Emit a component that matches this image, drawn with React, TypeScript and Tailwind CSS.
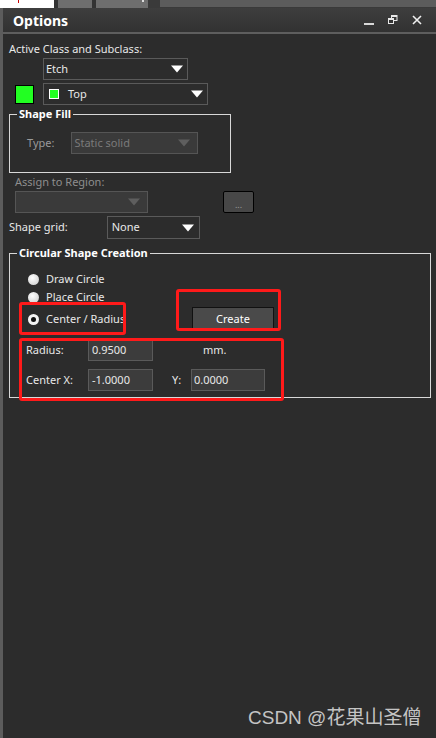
import React from "react";

function Tri({ c = "#ffffff" }: { c?: string }) {
  return (
    <svg width="12" height="8" viewBox="0 0 12 8">
      <path d="M0 0.5H12L6 7.5Z" fill={c} />
    </svg>
  );
}

function Radio({ on = false }: { on?: boolean }) {
  return (
    <span
      className={
        "flex h-[11px] w-[11px] items-center justify-center rounded-full " +
        (on ? "bg-[#f4f4f4]" : "bg-[radial-gradient(circle_at_40%_35%,#ffffff,#c8c8c8)]")
      }
    >
      {on && <span className="h-[5px] w-[5px] rounded-full bg-[#111]" />}
    </span>
  );
}

export default function App() {
  return (
    <div className="relative flex h-[738px] w-[436px] flex-col overflow-hidden bg-[#2c2c2c] font-['Noto_Sans','Open_Sans',sans-serif] text-[11px] text-[#e8e8e8]">
      {/* tab strip */}
      <div className="flex h-[8px] shrink-0 bg-[#5a5a5a]">
        <div className="relative w-[54px] bg-white">
          <span className="absolute left-[18px] top-0 h-[3px] w-[1px] bg-[#c00]" />
        </div>
        <div className="w-[4px] bg-[#333]" />
        <div className="w-[34px] bg-[#6e6e6e]" />
        <div className="w-[4px] bg-[#333]" />
        <div className="relative w-[52px] bg-[#6e6e6e]">
          <span className="absolute right-[4px] top-0 h-[2px] w-[2px] bg-[#ddd]" />
        </div>
        <div className="w-[12px] bg-[#3a3a3a]" />
        <div className="flex-1 border-b border-[#3a3a3a] bg-[#5c5c5c]" />
      </div>
      <div className="flex flex-1">
        <div className="w-[3px] shrink-0 bg-[#5c5c5c]" />
        <div className="flex flex-1 flex-col">
          {/* header */}
          <div className="flex h-[26px] shrink-0 items-center border-b-2 border-[#5e5e5e] bg-[linear-gradient(#3e3e3e,#323232)] pl-[10px] pr-[14px]">
            <span className="text-[14px] font-bold text-white">Options</span>
            <div className="ml-auto flex items-center">
              <svg width="11" height="10" viewBox="0 0 11 10" className="mr-[13px] mt-[2px]">
                <rect x="0" y="7" width="10" height="2" fill="#d8d8d8" />
              </svg>
              <svg width="10" height="10" viewBox="0 0 10 10" className="mr-[14px]">
                <rect x="3.5" y="0.5" width="5.5" height="5" fill="none" stroke="#e8e8e8" />
                <rect x="3.5" y="0.5" width="5.5" height="1.5" fill="#e8e8e8" />
                <rect x="0.5" y="3.5" width="5" height="5" fill="#333" stroke="#e8e8e8" />
                <rect x="0.5" y="3.5" width="5" height="1.5" fill="#e8e8e8" />
              </svg>
              <svg width="10" height="10" viewBox="0 0 10 10">
                <path d="M1 1L9 9M9 1L1 9" stroke="#f0f0f0" strokeWidth="1.6" />
              </svg>
            </div>
          </div>

          {/* content */}
          <div className="flex flex-col pl-[6px]">
            <div className="mt-[8px] h-[14px] leading-[14px]">Active Class and Subclass:</div>
            <div className="ml-[34px] mt-[2px] flex h-[22px] w-[145px] items-center border border-[#5a5a5a] pl-[2px] pr-[4px]">
              <span>Etch</span>
              <span className="ml-auto"><Tri /></span>
            </div>
            <div className="mt-[3px] flex items-center">
              <span className="ml-[6px] h-[19px] w-[19px] border border-black bg-[#22ff22]" />
              <div className="ml-[9px] flex h-[22px] w-[165px] items-center border border-[#5a5a5a] pl-[5px] pr-[4px]">
                <span className="h-[10px] w-[10px] border border-white bg-[#22ff22]" />
                <span className="ml-[9px]">Top</span>
                <span className="ml-auto"><Tri /></span>
              </div>
            </div>

            {/* Shape Fill */}
            <fieldset className="mt-[2px] h-[66px] w-[222px] border border-[#d8d8d8] px-[8px]">
              <legend className="ml-[-1px] px-[2px] text-[11px] font-bold leading-[14px] text-white">Shape Fill</legend>
              <div className="mt-[11px] flex items-center">
                <span className="ml-[9px] text-[#9a9a9a]">Type:</span>
                <div className="ml-[17px] flex h-[22px] w-[127px] items-center border border-[#555] bg-[#3a3a3a] pl-[2px] pr-[7px] text-[#7a7a7a]">
                  <span>Static solid</span>
                  <span className="ml-auto"><Tri c="#5e5e5e" /></span>
                </div>
              </div>
            </fieldset>

            <div className="ml-[6px] mt-[2px] h-[14px] leading-[14px] text-[#8e8e8e]">Assign to Region:</div>
            <div className="mt-[2px] flex items-center">
              <div className="ml-[6px] flex h-[22px] w-[133px] items-center justify-end border border-[#555] bg-[#3a3a3a] pr-[7px]">
                <Tri c="#5e5e5e" />
              </div>
              <div className="ml-[75px] flex h-[22px] w-[31px] items-end justify-center rounded-[2px] border border-black bg-[#474747] pb-[3px] text-[9px] leading-[9px] text-[#9a9a9a]">
                ...
              </div>
            </div>
            <div className="mt-[3px] flex items-center">
              <span>Shape grid:</span>
              <div className="ml-[39px] flex h-[23px] w-[93px] items-center border border-[#5a5a5a] pl-[4px] pr-[5px]">
                <span>None</span>
                <span className="ml-auto"><Tri /></span>
              </div>
            </div>

            {/* Circular Shape Creation */}
            <fieldset className="mt-[7px] h-[152px] w-[422px] border border-[#d8d8d8] px-[8px]">
              <legend className="ml-[-1px] px-[2px] text-[11px] font-bold leading-[14px] text-white">Circular Shape Creation</legend>
              <div className="flex">
                <div className="flex flex-col">
                  <div className="mt-[12px] flex h-[14px] items-center">
                    <span className="ml-[10px]"><Radio /></span>
                    <span className="ml-[7px]">Draw Circle</span>
                  </div>
                  <div className="mt-[4px] flex h-[14px] items-center">
                    <span className="ml-[10px]"><Radio /></span>
                    <span className="ml-[7px]">Place Circle</span>
                  </div>
                  <div className="mt-[8px] flex h-[14px] items-center">
                    <span className="ml-[10px]"><Radio on /></span>
                    <span className="ml-[7px] w-[78px] overflow-hidden whitespace-nowrap">Center / Radius</span>
                  </div>
                </div>
                <div className="ml-[68px] mt-[47px] flex h-[24px] w-[82px] items-center justify-center border border-[#111] bg-[#4a4a4a] text-white">
                  Create
                </div>
              </div>
              <div className="mt-[9px] flex items-center">
                <span className="ml-[8px] w-[62px]">Radius:</span>
                <div className="flex h-[21px] w-[65px] items-center border border-[#5a5a5a] bg-[#3c3c3c] pl-[3px]">0.9500</div>
                <span className="ml-[50px]">mm.</span>
              </div>
              <div className="mt-[8px] flex items-center">
                <span className="ml-[8px] w-[62px]">Center X:</span>
                <div className="flex h-[22px] w-[65px] items-center border border-[#5a5a5a] bg-[#3c3c3c] pl-[3px]">-1.0000</div>
                <span className="ml-[19px] w-[19px]">Y:</span>
                <div className="flex h-[22px] w-[74px] items-center border border-[#5a5a5a] bg-[#3c3c3c] pl-[2px]">0.0000</div>
              </div>
            </fieldset>
          </div>
        </div>
      </div>

      {/* red annotation boxes */}
      <div className="absolute left-[19px] top-[302px] h-[33px] w-[107px] rounded-[3px] border-[3px] border-[#ff1a1a]" />
      <div className="absolute left-[176px] top-[289px] h-[42px] w-[105px] rounded-[3px] border-[3px] border-[#ff1a1a]" />
      <div className="absolute left-[19px] top-[338px] h-[63px] w-[265px] rounded-[3px] border-[3px] border-[#ff1a1a]" />

      {/* watermark */}
      <div className="absolute left-[248px] top-[705px] font-['Liberation_Sans','Noto_Sans_CJK_SC',sans-serif] text-[19px] leading-[26px] text-[#c4c4c4]">
        CSDN @花果山圣僧
      </div>
    </div>
  );
}
